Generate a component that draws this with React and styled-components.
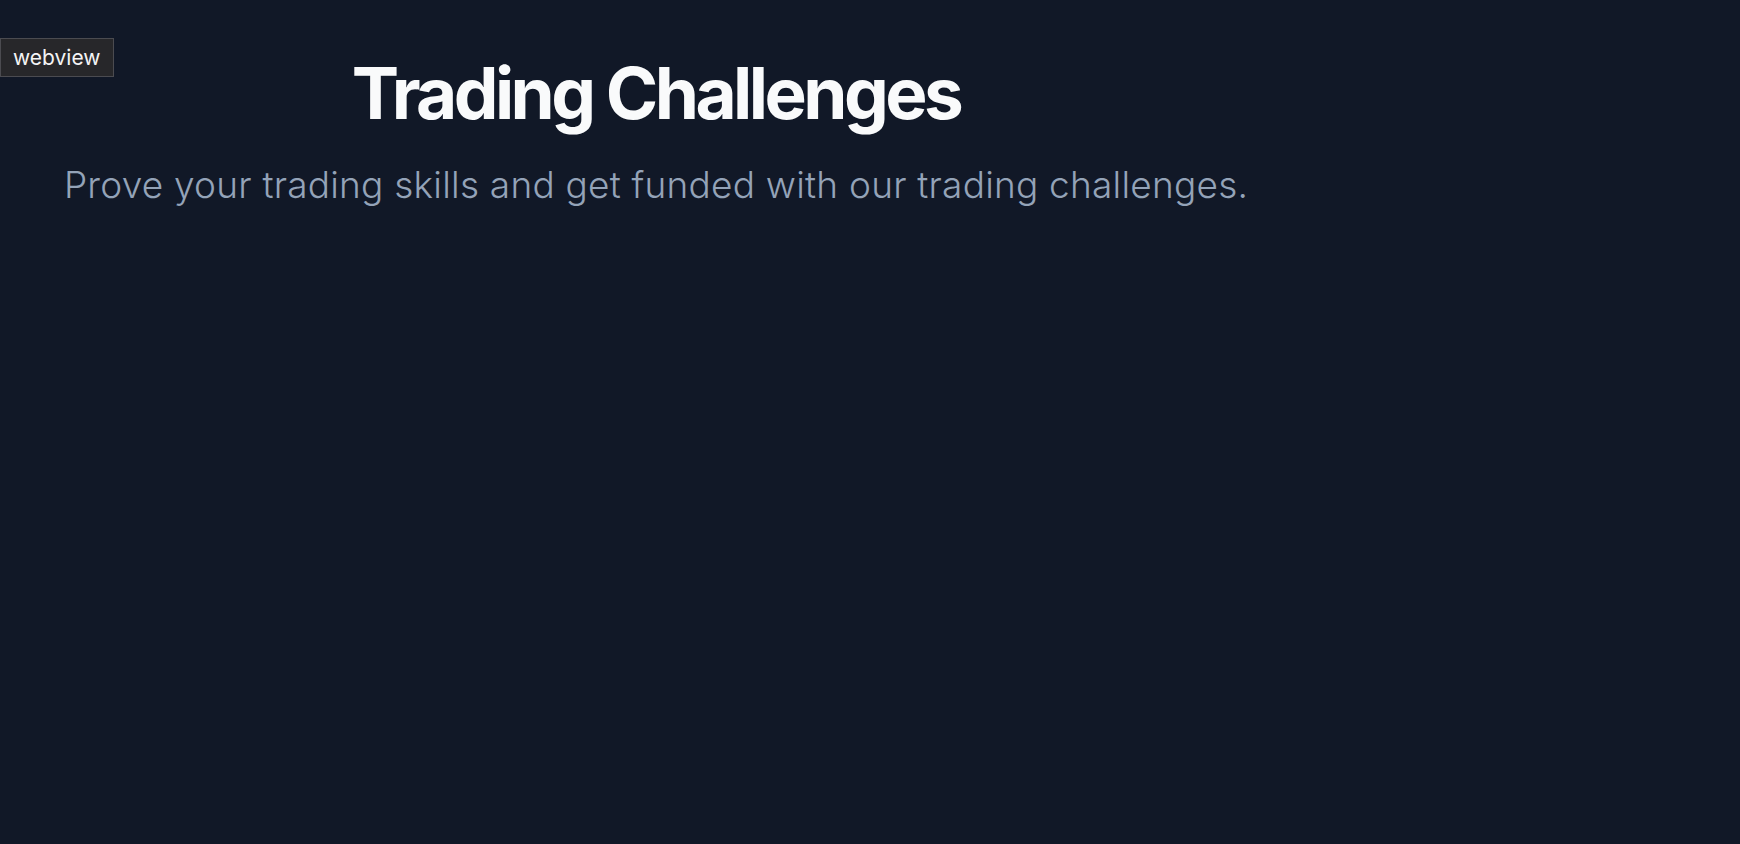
import React from "react";
import styled, { createGlobalStyle } from "styled-components";

const GlobalStyle = createGlobalStyle`
	html, body {
		margin: 0;
		padding: 0;
		background: #111827;
	}
	body {
		font-family: Inter, "Noto Sans", sans-serif;
	}
`;

const Page = styled.main`
	position: relative;
	height: 844px;
	overflow: hidden;
	display: grid;
	grid-template-columns: 1312px 1fr;
	align-content: start;
	padding-top: 58px;
	box-sizing: border-box;
`;

const Hero = styled.section`
	text-align: center;
`;

const Title = styled.h1`
	margin: 0;
	font-size: 71px;
	line-height: 1;
	font-weight: 700;
	letter-spacing: -0.05em;
	color: #f9fafb;
`;

const Subtitle = styled.p`
	margin: 36px 0 0;
	font-size: 37px;
	line-height: 40px;
	font-weight: 300;
	letter-spacing: 0.006em;
	color: #94a3b8;
`;

const Badge = styled.div`
	position: absolute;
	top: 38px;
	left: 0;
	padding: 0 13px 0 12px;
	height: 37px;
	display: flex;
	align-items: center;
	background: #27272a;
	border: 1px solid #4b4b50;
	color: #f4f4f5;
	font-family: Inter, "Liberation Sans", sans-serif;
	font-size: 21px;
`;

export default function App() {
	return (
		<>
			<GlobalStyle />
			<Page>
				<Badge>webview</Badge>
				<Hero>
					<Title>Trading Challenges</Title>
					<Subtitle>
						Prove your trading skills and get funded with our trading challenges.
					</Subtitle>
				</Hero>
			</Page>
		</>
	);
}
